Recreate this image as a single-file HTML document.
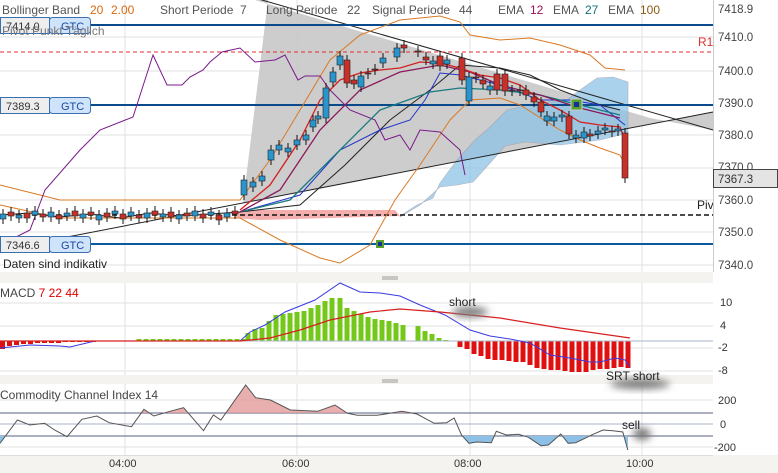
<!DOCTYPE html>
<html><head><meta charset="utf-8"><style>
html,body{margin:0;padding:0;background:#fff;}
svg{display:block;font-family:"Liberation Sans",sans-serif;}
</style></head><body>
<svg id="s" width="778" height="473" viewBox="0 0 778 473" xmlns="http://www.w3.org/2000/svg">
<defs>
<filter id="bl" x="-50%" y="-50%" width="200%" height="200%"><feGaussianBlur stdDeviation="4"/></filter>
<clipPath id="above"><rect x="0" y="380" width="713" height="33"/></clipPath>
<clipPath id="below"><rect x="0" y="436" width="713" height="20"/></clipPath>
</defs>
<rect x="0" y="0" width="778" height="473" fill="#fff"/>
<g stroke="#e2e2e2" stroke-width="1">
<line x1="0" y1="37" x2="713" y2="37"/><line x1="0" y1="71" x2="713" y2="71"/><line x1="0" y1="135" x2="713" y2="135"/><line x1="0" y1="168" x2="713" y2="168"/><line x1="0" y1="200" x2="713" y2="200"/><line x1="0" y1="232" x2="713" y2="232"/><line x1="0" y1="265" x2="713" y2="265"/>
<line x1="125" y1="0" x2="125" y2="455"/><line x1="297" y1="0" x2="297" y2="455"/><line x1="470" y1="0" x2="470" y2="455"/><line x1="642" y1="0" x2="642" y2="455"/>
<line x1="0" y1="303" x2="713" y2="303"/><line x1="0" y1="326" x2="713" y2="326"/><line x1="0" y1="348" x2="713" y2="348"/><line x1="0" y1="371" x2="713" y2="371"/>
<line x1="0" y1="400" x2="713" y2="400"/><line x1="0" y1="447" x2="713" y2="447"/>
</g>
<polygon points="268,0 255,0 650,118 713,130 713,112 650,124 243,203" fill="#c8c8c8" opacity="0.9"/>
<polygon points="400,216 417,205 433,198 440,183 457,160 475,140 490,127 507,110 537,103 567,100 580,90 597,78 613,77 628,82 628,133 600,140 560,145 525,142 505,146 490,163 473,182 457,185 440,187 420,205 400,217" fill="#8fc3e6" opacity="0.75" stroke="#99a" stroke-width="0.6"/>
<polygon points="235,212 260,210 395,210 400,216 260,220 235,218" fill="#f19a9a" opacity="0.8"/>
<line x1="255" y1="-2" x2="713" y2="130" stroke="#222" stroke-width="1"/>
<line x1="0" y1="250" x2="713" y2="112" stroke="#222" stroke-width="1"/>
<line x1="0" y1="25" x2="713" y2="25" stroke="#0b4a8a" stroke-width="2"/>
<line x1="0" y1="105" x2="713" y2="105" stroke="#0b4a8a" stroke-width="2"/>
<line x1="0" y1="244" x2="713" y2="244" stroke="#0b5aa0" stroke-width="2"/>
<line x1="0" y1="52" x2="713" y2="52" stroke="#e03030" stroke-width="1" stroke-dasharray="4,3"/>
<line x1="0" y1="215" x2="713" y2="215" stroke="#111" stroke-width="1.6" stroke-dasharray="5,3"/>
<g fill="none" stroke-width="1">
<polyline stroke="#d97a25" points="0,185 60,200 240,200 270,160 300,110 330,60 360,35 400,20 440,16 460,22 470,35 500,40 530,38 560,45 590,55 605,68 625,70"/>
<polyline stroke="#d97a25" points="0,205 60,218 240,218 280,240 320,258 340,263 370,245 395,200 420,165 450,120 470,100 500,98 520,105 560,130 580,140 600,148 620,155 625,165"/>
<polyline stroke="#7a1a8a" points="0,245 30,230 45,190 80,150 100,130 133,117 153,55 167,85 182,85 190,77 203,70 210,62 222,52 240,48 255,62 275,60 285,55 298,80 305,76 320,76 330,90 350,110 375,120 385,140 400,135 410,150 420,130 440,132 460,150 465,175"/>
<polyline stroke="#222" points="0,215 30,213 60,217 90,214 120,218 150,213 180,216 210,214 240,212 300,205 345,165 390,120 430,90 460,65 500,68 530,75 560,90 600,105 620,110"/>
<polyline stroke="#2233cc" points="240,212 300,195 340,150 380,130 410,120 425,100 440,73 460,75 500,85 540,100 570,100 600,105 625,125"/>
<polyline stroke="#1a7a80" stroke-width="1.3" points="240,212 290,200 330,160 380,110 430,92 460,88 500,90 540,95 580,105 620,115"/>
<polyline stroke="#8a1a5a" stroke-width="1.3" points="240,212 280,190 320,130 360,90 400,72 440,65 470,72 500,85 540,95 580,108 620,118"/>
<polyline stroke="#d42020" stroke-width="1.3" points="240,210 270,185 300,140 320,100 340,80 360,73 380,70 400,68 420,62 440,63 460,68 480,75 500,78 520,85 540,100 560,110 580,122 600,125 620,127 625,140"/>
</g>
<g id="candles"></g>
<rect x="571" y="99" width="11" height="11" fill="#5aa02a" stroke="#ccc"/><rect x="574" y="102" width="5" height="5" fill="#1030a0"/>
<rect x="376" y="240" width="8" height="8" fill="#5aa02a"/><rect x="378" y="242" width="4" height="4" fill="#1030a0"/>
<g font-size="11">
<rect x="0.5" y="17.5" width="49" height="16" fill="#eee" stroke="#3a6fb0"/><rect x="49.5" y="17.5" width="41" height="16" rx="3" fill="#cfe3fb" stroke="#3a6fb0"/>
<text x="6" y="30" fill="#333">7414.0</text><text x="61" y="30" fill="#1a4aa0">GTC</text>
<rect x="0.5" y="97.5" width="49" height="16" fill="#eee" stroke="#3a6fb0"/><rect x="49.5" y="97.5" width="41" height="16" rx="3" fill="#cfe3fb" stroke="#3a6fb0"/>
<text x="6" y="110" fill="#333">7389.3</text><text x="61" y="110" fill="#1a4aa0">GTC</text>
<rect x="0.5" y="236.5" width="49" height="16" fill="#eee" stroke="#3a6fb0"/><rect x="49.5" y="236.5" width="41" height="16" rx="3" fill="#cfe3fb" stroke="#3a6fb0"/>
<text x="6" y="249" fill="#333">7346.6</text><text x="61" y="249" fill="#1a4aa0">GTC</text>
</g>
<g font-size="12">
<text x="2" y="14" fill="#555">Bollinger Band</text><text x="90" y="14" fill="#d96a10">20</text><text x="111" y="14" fill="#d96a10">2.00</text>
<text x="160" y="14" fill="#555">Short Periode</text><text x="240" y="14" fill="#555">7</text>
<text x="266" y="14" fill="#555">Long Periode</text><text x="347" y="14" fill="#555">22</text>
<text x="372" y="14" fill="#555">Signal Periode</text><text x="459" y="14" fill="#555">44</text>
<text x="498" y="14" fill="#555">EMA</text><text x="530" y="14" fill="#a0105a">12</text>
<text x="553" y="14" fill="#555">EMA</text><text x="585" y="14" fill="#107080">27</text>
<text x="608" y="14" fill="#555">EMA</text><text x="640" y="14" fill="#8a5a10">100</text>
<text x="2" y="35" fill="#777">Pivot Punkt  Täglich</text>
<text x="698" y="46" fill="#e03030">R1</text>
<text x="697" y="209" fill="#222">Piv</text>
<text x="3" y="268" fill="#222">Daten sind indikativ</text>
</g>
<line x1="713.5" y1="0" x2="713.5" y2="455" stroke="#ccc"/>
<g font-size="11.5" fill="#444">
<text x="718" y="13">7418.9</text><text x="718" y="41">7410.0</text><text x="718" y="75">7400.0</text><text x="718" y="107">7390.0</text><text x="718" y="139">7380.0</text><text x="718" y="171">7370.0</text><text x="718" y="204">7360.0</text><text x="718" y="236">7350.0</text><text x="718" y="269">7340.0</text>
</g>
<rect x="713.5" y="169.5" width="64" height="18" fill="#e4e4e4" stroke="#444"/><text x="718" y="183" font-size="11.5" fill="#333">7367.3</text>
<rect x="0" y="272" width="778" height="11" fill="#f4f3ef"/><rect x="0" y="375" width="778" height="9" fill="#f4f3ef"/>
<rect x="713" y="272" width="65" height="201" fill="#fff"/>
<g stroke="#999"><line x1="382" y1="277" x2="398" y2="277"/><line x1="382" y1="279" x2="398" y2="279"/><line x1="382" y1="380" x2="398" y2="380"/><line x1="382" y1="382" x2="398" y2="382"/></g>
<g id="macd"></g>
<line x1="0" y1="341" x2="713" y2="341" stroke="#aab4c8"/>
<polyline fill="none" stroke="#3a3ae0" points="0,348 30,345 60,346 70,347 95,341 140,341 240,341 250,332 265,325 285,312 315,300 340,283 360,292 380,293 400,296 420,305 445,315 470,330 490,336 510,339 530,343 550,355 570,358 590,362 600,362 615,358 625,360 630,367"/>
<polyline fill="none" stroke="#d82020" stroke-width="1.2" points="0,341 240,341 270,338 300,330 330,320 370,312 400,309 440,312 500,318 560,328 630,338"/>
<text x="0" y="297" font-size="12" fill="#444">MACD <tspan fill="#d00">7   22  44</tspan></text>
<ellipse cx="470" cy="312" rx="18" ry="5" fill="#777" filter="url(#bl)"/>
<text x="449" y="306" font-size="12" fill="#222">short</text>
<ellipse cx="640" cy="384" rx="30" ry="5" fill="#777" filter="url(#bl)"/>
<text x="606" y="380" font-size="12" fill="#222">SRT short</text>
<g font-size="11" fill="#333"><text x="720" y="306">10</text><text x="720" y="329">4</text><text x="718" y="351">-2</text><text x="718" y="374">-8</text>
<text x="718" y="404">200</text><text x="720" y="428">0</text><text x="714" y="451">-200</text></g>
<line x1="0" y1="413" x2="713" y2="413" stroke="#5a5f80"/><line x1="0" y1="424" x2="713" y2="424" stroke="#aab4c8"/><line x1="0" y1="436" x2="713" y2="436" stroke="#5a5f80"/>
<g id="cci"></g>
<text x="0" y="399" font-size="12" fill="#444">Commodity Channel Index  14</text>
<ellipse cx="642" cy="434" rx="9" ry="6" fill="#777" filter="url(#bl)"/>
<text x="622" y="429" font-size="12" fill="#222">sell</text>
<rect x="0" y="455" width="778" height="18" fill="#f4f3ef"/>
<line x1="0" y1="455.5" x2="713" y2="455.5" stroke="#ddd"/>
<g font-size="11" fill="#333"><text x="109" y="467">04:00</text><text x="282" y="467">06:00</text><text x="454" y="467">08:00</text><text x="626" y="467">10:00</text></g>
</svg>
<script>
var NS="http://www.w3.org/2000/svg";
function el(p,t,a){var e=document.createElementNS(NS,t);for(var k in a)e.setAttribute(k,a[k]);document.getElementById(p).appendChild(e);return e;}
var C=[[244,180,195,1],[253,182,187,1],[262,176,181,1],[271,150,160,1],[279,145,150,1],[288,148,152,1],[297,140,145,1],[306,135,140,1],[313,120,127,1],[318,116,119,1],[326,88,118,1],[333,72,82,1],[340,56,65,1],[347,60,83,0],[354,80,84,0],[361,76,87,1],[368,73,74,0],[375,69,70,0],[383,58,63,1],[397,48,57,1],[404,45,48,0],[418,51,52,0],[426,57,60,0],[433,61,64,1],[440,56,66,0],[447,60,64,1],[462,58,80,0],[469,77,101,1],[476,77,78,0],[483,80,84,0],[490,86,90,1],[497,74,90,0],[505,74,91,0],[512,90,91,0],[520,90,91,0],[526,90,95,0],[534,97,102,0],[541,102,112,0],[547,116,121,1],[554,117,121,1],[562,115,117,1],[569,116,134,0],[576,135,138,1],[584,132,138,1],[590,134,136,0],[598,131,134,1],[605,128,130,1],[612,131,132,0],[618,129,131,1],[625,133,178,0]];
for(var i=0;i<30;i++){var y=213+((i*7)%5)-2;C.unshift([235-i*8,y,y+3+(i%3),i%2]);}
C.forEach(function(c){var x=c[0];el("candles","line",{x1:x,y1:c[1]-5,x2:x,y2:c[2]+5,stroke:"#111","stroke-width":1});
el("candles","rect",{x:x-3,y:c[1],width:6,height:Math.max(1,c[2]-c[1]),fill:c[3]?"#2a95cc":"#c8302a",stroke:"#222","stroke-width":0.6});});
var G=[[248,8],[255,12],[262,13],[269,20],[276,26],[283,27],[290,28],[297,29],[304,30],[311,33],[318,36],[325,40],[332,43],[340,43],[347,33],[354,30],[361,27],[368,24],[375,22],[382,21],[389,20],[396,18],[403,16],[418,15],[425,10],[432,7],[439,3],[446,1]];
for(var x=139;x<245;x+=7)G.push([x,x%14?2:3]);
G.forEach(function(b){el("macd","rect",{x:b[0]-2.5,y:341-b[1],width:5,height:b[1],fill:"#74c81a"});});
var R=[6,8,13,15,18,19,19,20,21,21,24,27,28,29,29,30,31,31,31,29,28,28,27,26,27];
R.forEach(function(h,i){el("macd","rect",{x:460+i*7-2.5,y:341,width:5,height:h,fill:"#e01010"});});
var L=[8,5,4,3,3,2,2,2,2,1,1,1,1,1];
L.forEach(function(h,i){el("macd","rect",{x:i*7,y:341,width:5,height:h,fill:"#e01010"});});
var P=[[0,520],[35,450],[60,465],[90,460],[110,480],[135,500],[165,448],[195,438],[220,458],[265,470],[290,418],[310,438],[340,425],[370,413],[410,482],[430,435],[445,450],[495,345],[515,383],[545,390],[585,420],[640,424],[675,405],[700,430],[720,436],[760,436],[810,424],[840,432],[875,460],[900,458],[915,444],[930,495],[945,520],[960,516],[990,518],[1000,484],[1020,495],[1045,493],[1065,502],[1090,527],[1105,525],[1130,492],[1145,520],[1160,518],[1195,493],[1215,480],[1235,482],[1255,486],[1265,540]];
var pts=P.map(function(p){return (p[0]/2.015).toFixed(1)+","+(p[1]/3+270).toFixed(1);});
el("cci","polygon",{points:"0,413 "+pts.join(" ")+" 628,413",fill:"#e49a9a",opacity:0.8,"clip-path":"url(#above)"});
el("cci","polygon",{points:"0,436 "+pts.join(" ")+" 628,436",fill:"#8cc0e6","clip-path":"url(#below)"});
el("cci","polyline",{points:pts.join(" "),fill:"none",stroke:"#555","stroke-width":1});
</script>
</body></html>
